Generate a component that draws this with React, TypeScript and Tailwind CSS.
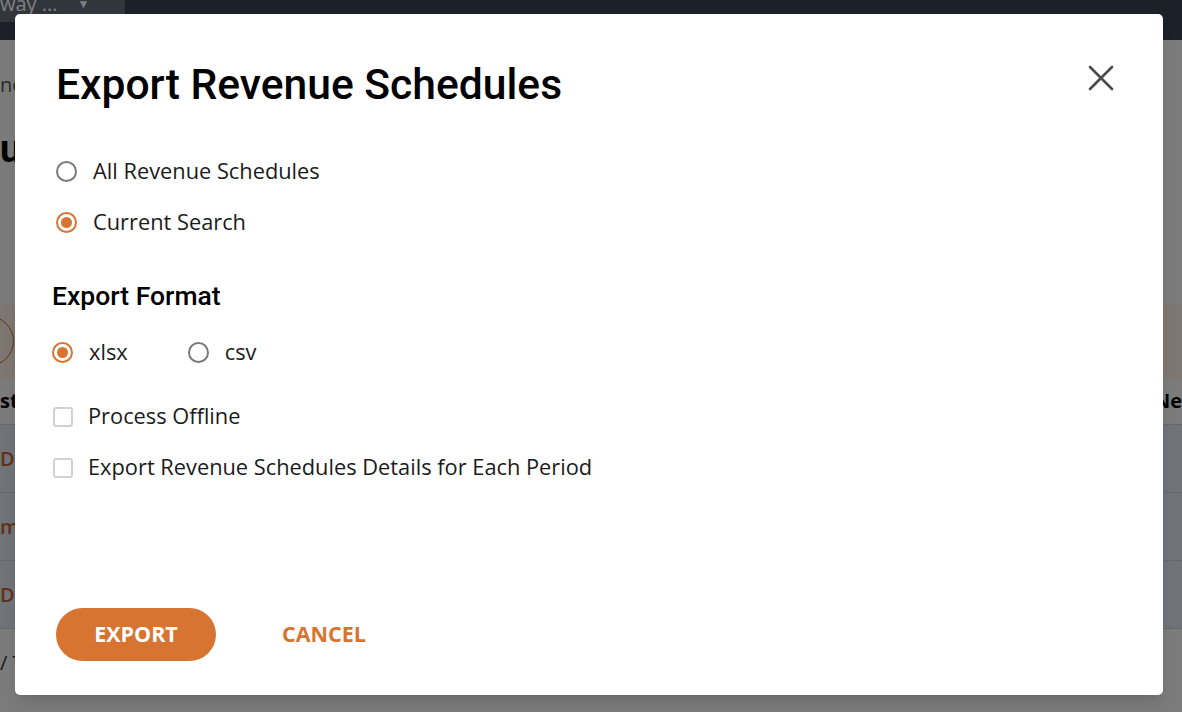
import React, { useState } from 'react';

const ORANGE = '#d87432';

function Radio({ checked, onClick, label }: { checked: boolean; onClick: () => void; label: string }) {
  return (
    <button onClick={onClick} className="flex items-center gap-[16px] h-[51px] text-left">
      <span
        className={`w-[21px] h-[21px] rounded-full border-2 flex items-center justify-center ${checked ? 'border-[#d87432]' : 'border-[#7a7a7a]'}`}
      >
        {checked && <span className="w-[11px] h-[11px] rounded-full bg-[#d87432]" />}
      </span>
      <span className="text-[21.8px] text-[#1b1b1b]">{label}</span>
    </button>
  );
}

function Check({ checked, onClick, label }: { checked: boolean; onClick: () => void; label: string }) {
  return (
    <button onClick={onClick} className="flex items-center gap-[15px] h-[51px] text-left">
      <span className="w-[20px] h-[20px] rounded-[3px] border-2 border-[#cfd0d8] bg-white" />
      <span className="text-[21.8px] text-[#1b1b1b]">{label}</span>
    </button>
  );
}

export default function App() {
  const [scope, setScope] = useState<'all' | 'current'>('current');
  const [format, setFormat] = useState<'xlsx' | 'csv'>('xlsx');
  const [offline, setOffline] = useState(false);
  const [details, setDetails] = useState(false);

  return (
    <div className="relative w-[1182px] h-[712px] overflow-hidden bg-[#f6f6f6]" style={{ fontFamily: '"Open Sans", sans-serif' }}>
      {/* page behind the dialog */}
      <div className="flex flex-col h-full">
        <div className="h-[40px] bg-[#394052] flex">
          <div className="w-[125px] h-[28px] bg-[#636a78] flex items-start gap-[20px] text-white text-[20px] leading-none -mt-[6px]">
            <span>way ...</span>
            <span className="text-[12px] mt-[4px]">▼</span>
          </div>
        </div>
        <div className="h-[60px] flex items-end text-[20px] text-[#555]">ne</div>
        <div className="h-[68px] flex items-end text-[38px] font-bold text-black leading-none" style={{ fontFamily: 'Roboto, sans-serif' }}>u</div>
        <div className="h-[136px]" />
        <div className="h-[74px] bg-[#fdece0] flex items-center justify-between">
          <span className="w-[50px] h-[50px] rounded-full border border-[#c46a2c] -ml-[36px]" />
        </div>
        <div className="h-[46px] flex items-center justify-between text-[20px] font-bold text-black">
          <span>st</span>
          <span>Ne</span>
        </div>
        <div className="bg-[#e1e7ee] flex flex-col">
          <div className="h-[68px] border-t border-[#c9ced6] flex items-center text-[20px] font-semibold text-[#c0632a]">Da</div>
          <div className="h-[68px] border-t border-[#c9ced6] flex items-center text-[20px] font-semibold text-[#c0632a]">m</div>
          <div className="h-[68px] border-t border-[#c9ced6] flex items-center text-[20px] font-semibold text-[#c0632a]">Da</div>
        </div>
        <div className="h-[68px] border-t border-[#c9ced6] flex items-center text-[20px] text-[#333]">/ T</div>
      </div>

      {/* overlay */}
      <div className="absolute inset-0 bg-black/50" />

      {/* dialog */}
      <div className="absolute left-[15px] top-[14px] w-[1148px] h-[681px] bg-white rounded-[5px] shadow-lg flex flex-col">
        <div className="flex items-start justify-between pl-[41px] pr-[49px] pt-[46px]">
          <h1 className="text-[42.6px] leading-[48px] font-medium text-black" style={{ fontFamily: 'Roboto, sans-serif' }}>
            Export Revenue Schedules
          </h1>
          <button className="mt-[5px] w-[26px] h-[26px]" aria-label="Close">
            <svg viewBox="0 0 26 26" width="26" height="26">
              <path d="M2 2 L24 24 M24 2 L2 24" stroke="#4b4b4b" strokeWidth="2.6" strokeLinecap="round" />
            </svg>
          </button>
        </div>

        <div className="flex flex-col pl-[41px] mt-[38px]">
          <Radio checked={scope === 'all'} onClick={() => setScope('all')} label="All Revenue Schedules" />
          <Radio checked={scope === 'current'} onClick={() => setScope('current')} label="Current Search" />
        </div>

        <div className="pl-[37px] mt-[33px]">
          <h2 className="text-[26.5px] leading-[30px] font-medium text-black" style={{ fontFamily: 'Roboto, sans-serif' }}>Export Format</h2>
          <div className="flex gap-[60px] mt-[16px]">
            <Radio checked={format === 'xlsx'} onClick={() => setFormat('xlsx')} label="xlsx" />
            <Radio checked={format === 'csv'} onClick={() => setFormat('csv')} label="csv" />
          </div>
          <div className="flex flex-col mt-[13px] pl-[1px]">
            <Check checked={offline} onClick={() => setOffline(!offline)} label="Process Offline" />
            <Check checked={details} onClick={() => setDetails(!details)} label="Export Revenue Schedules Details for Each Period" />
          </div>
        </div>

        <div className="flex items-center gap-[66px] pl-[41px] mt-auto mb-[34px]">
          <button className="w-[160px] h-[53px] rounded-full bg-[#d87432] text-white text-[21.5px] font-bold">EXPORT</button>
          <button className="text-[21.5px] font-bold" style={{ color: ORANGE }}>CANCEL</button>
        </div>
      </div>
    </div>
  );
}
